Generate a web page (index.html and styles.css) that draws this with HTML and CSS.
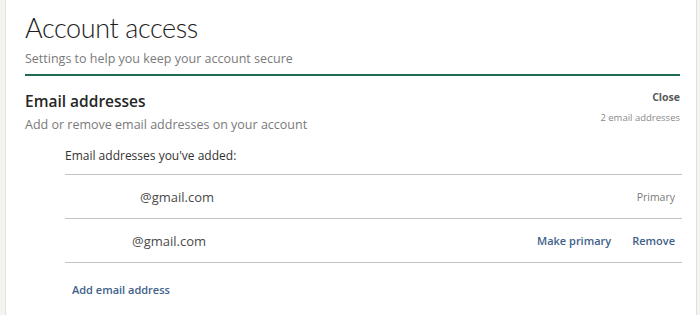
FILE: index.html
```html
<!DOCTYPE html>
<html>
<head>
<meta charset="utf-8">
<link rel="stylesheet" href="styles.css">
</head>
<body>
<div class="frame">
  <div class="edge-left"></div>
  <main class="content">
    <header class="head">
      <h1 class="title">Account access</h1>
      <p class="subtitle">Settings to help you keep your account secure</p>
    </header>
    <section class="section">
      <div class="section-head">
        <div>
          <h2 class="section-title">Email addresses</h2>
          <p class="section-desc">Add or remove email addresses on your account</p>
        </div>
        <div class="section-meta">
          <a class="close">Close</a>
          <span class="count">2 email addresses</span>
        </div>
      </div>
      <div class="list">
        <div class="list-label">Email addresses you've added:</div>
        <div class="row">
          <span class="email e1">@gmail.com</span>
          <span class="status">Primary</span>
        </div>
        <div class="row">
          <span class="email e2">@gmail.com</span>
          <span class="actions"><a class="link">Make primary</a><a class="link">Remove</a></span>
        </div>
        <a class="add">Add email address</a>
      </div>
    </section>
  </main>
  <div class="edge-right"></div>
</div>
</body>
</html>
```
FILE: styles.css
```css
html, body {
  margin: 0;
  padding: 0;
  background: #ffffff;
  font-family: "Open Sans", "Noto Sans", sans-serif;
}
.frame {
  display: flex;
  width: 700px;
  height: 315px;
  overflow: hidden;
}
.edge-left {
  width: 5px;
  background: #f3f3f0;
  border-right: 1px solid #e2e2dc;
  flex: none;
}
.edge-right {
  width: 3px;
  background: #f3f3f0;
  border-left: 1px solid #e2e2dc;
  flex: none;
}
.content {
  flex: 1;
  padding: 0 16px 0 19px;
}
.head {
  padding-top: 11px;
  padding-bottom: 7px;
  border-bottom: 2px solid #1f6a52;
}
.title {
  margin: 0;
  font-family: "Lato", "Open Sans", sans-serif;
  font-weight: 300;
  font-size: 27px;
  line-height: 34px;
  letter-spacing: -0.4px;
  color: #1d1d1d;
}
.subtitle {
  margin: 6px 0 0;
  font-size: 12.5px;
  line-height: 16px;
  color: #7a7a7a;
}
.section {
  padding-top: 14px;
}
.section-head {
  display: flex;
  justify-content: space-between;
}
.section-title {
  margin: 0;
  font-size: 15.5px;
  font-weight: 600;
  line-height: 22px;
  color: #262626;
}
.section-desc {
  margin: 4px 0 0;
  font-size: 12.5px;
  line-height: 18px;
  color: #7a7a7a;
}
.section-meta {
  display: flex;
  flex-direction: column;
  align-items: flex-end;
  gap: 7px;
  padding-top: 0;
}
.close {
  font-size: 10.5px;
  font-weight: 700;
  color: #5a5a5a;
  line-height: 14px;
}
.count {
  font-size: 9.5px;
  color: #8a8a8a;
  line-height: 14px;
}
.list {
  margin-left: 40px;
  margin-right: -2px;
  padding-top: 13px;
}
.list-label {
  font-size: 12px;
  color: #333;
  line-height: 18px;
  padding-bottom: 9px;
  border-bottom: 1px solid #c4c4c4;
}
.row {
  display: flex;
  justify-content: space-between;
  align-items: center;
  height: 43px;
  border-bottom: 1px solid #c4c4c4;
  padding-right: 7px;
}
.email {
  font-size: 13px;
  color: #4a4a4a;
}
.e1 { padding-left: 75px; }
.e2 { padding-left: 67px; }
.status {
  font-size: 10.5px;
  color: #7a7a7a;
}
.actions {
  display: flex;
  gap: 21px;
}
.link {
  font-size: 11px;
  font-weight: 600;
  color: #3f6189;
}
.add {
  display: inline-block;
  margin: 19px 0 0 7px;
  font-size: 11px;
  font-weight: 600;
  color: #3f6189;
}
```
